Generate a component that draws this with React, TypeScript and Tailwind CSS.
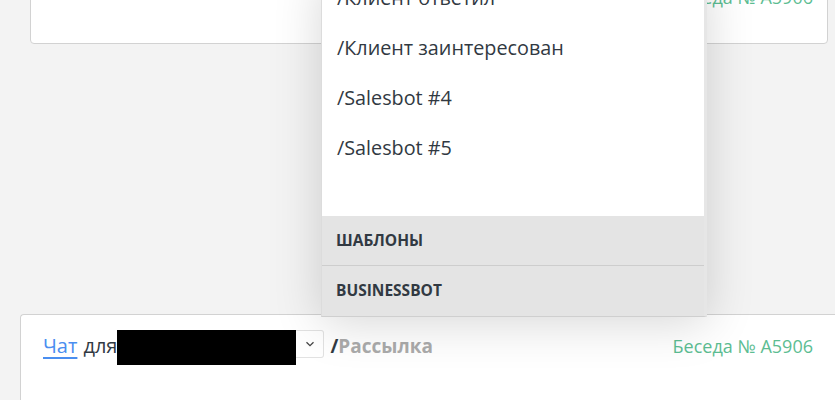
import React from "react";

const font = { fontFamily: '"Open Sans", "Noto Sans", sans-serif' };

export default function App() {
  const items = ["/Клиент ответил", "/Клиент заинтересован", "/Salesbot #4", "/Salesbot #5"];
  return (
    <div
      className="relative h-[400px] w-[835px] overflow-hidden bg-[#f3f3f3] text-[#313942]"
      style={font}
    >
      {/* top card */}
      <div className="ml-[30px] mr-[7px] -mt-[35px] flex h-[79px] items-start justify-end rounded-[4px] border border-[#d2d2d2] bg-white pr-[14px] pt-[17px]">
        <span className="text-[18px] leading-[28px] text-[#5cbd92]">Беседа № A5906</span>
      </div>

      {/* bottom card */}
      <div className="ml-[20px] mt-[270px] flex h-[120px] items-start justify-between rounded-tl-[4px] border-l border-t border-[#d2d2d2] bg-white pl-[22px] pr-[22px] pt-[15px]">
        <div className="flex items-start">
          <a className="text-[20px] leading-[32px] text-[#4a8ef0] underline underline-offset-[4px]">Чат</a>
          <span className="ml-[6px] text-[20px] leading-[32px] text-[#313942]">для</span>
          <div className="h-[35px] w-[179px] bg-black" />
          <div className="flex h-[28px] w-[28px] items-center justify-center rounded-r-[3px] border border-l-0 border-[#e2e2e2] bg-white">
            <svg width="10" height="6" viewBox="0 0 10 6" fill="none">
              <path d="M1.5 1.2 5 4.6 8.5 1.2" stroke="#444" strokeWidth="1.3" />
            </svg>
          </div>
          <span className="ml-[6px] text-[19px] font-bold leading-[32px]">
            <span className="text-[#313942]">/</span>
            <span className="text-[#ababab]">Рассылка</span>
          </span>
        </div>
        <span className="text-[18px] leading-[32px] text-[#5cbd92]">Беседа № A5906</span>
      </div>

      {/* dropdown */}
      <div className="absolute left-[321px] top-[-27px] flex w-[386px] flex-col border-l border-r-[3px] border-b border-l-[#dcdcdc] border-r-[#e6e6e6] border-b-[#cfcfcf] bg-white shadow-[0_6px_45px_rgba(0,0,0,0.16)]">
        {items.map((t) => (
          <div key={t} className="flex h-[50px] items-center pl-[15px] text-[19.8px]">
            {t}
          </div>
        ))}
        <div className="h-[43px]" />
        <div className="flex h-[50px] items-center border-b border-[#cdcdcd] bg-[#e4e4e4] pl-[14px] text-[15.5px] font-bold uppercase">
          Шаблоны
        </div>
        <div className="flex h-[50px] items-center bg-[#e4e4e4] pl-[14px] text-[15.5px] font-bold uppercase">
          Businessbot
        </div>
      </div>
    </div>
  );
}
